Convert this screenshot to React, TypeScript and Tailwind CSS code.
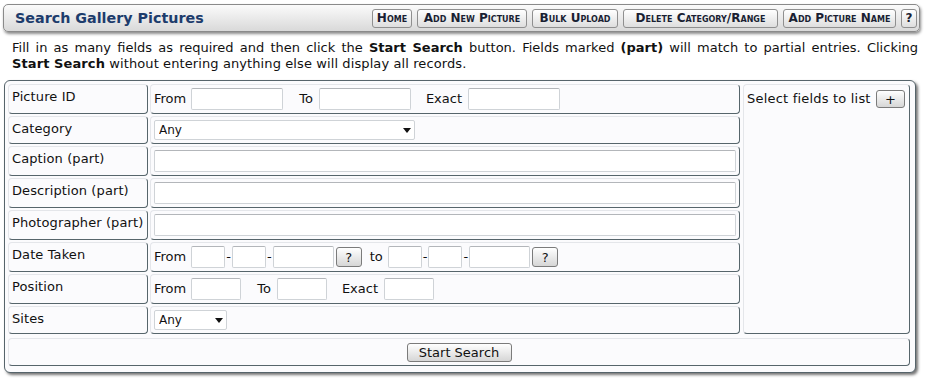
import React from 'react';

const cell = 'border border-t-[#e4e6ea] border-l-[#e4e6ea] border-r-[#56656b] border-b-[#56656b] rounded-[4px]';
const input = 'h-[22px] bg-white border border-[#cfd3d7] border-t-[#b3b6ba] rounded-[2px] outline-none px-1 text-[13px]';
const btn = 'bg-gradient-to-b from-white to-[#d6d6d6] border border-[#7b7b7b] rounded-[3px] text-[13px] leading-none text-[#111] flex items-center justify-center';

const Select: React.FC<{ width: string }> = ({ width }) => (
  <div className={`relative h-[20px] ${width}`}>
    <select className="appearance-none w-full h-full bg-white border border-[#cfd3d7] rounded-[2px] pl-[4px] text-[12px] text-[#111] outline-none">
      <option>Any</option>
    </select>
    <svg className="absolute right-[4px] top-[8px] pointer-events-none" width="8" height="5" viewBox="0 0 8 5">
      <path d="M0 0h8L4 5z" fill="#111" />
    </svg>
  </div>
);

const Row: React.FC<{ label: string; children: React.ReactNode }> = ({ label, children }) => (
  <div className="flex gap-[2px]">
    <div className={`${cell} w-[140px] pl-[3px] pt-[4px] leading-[16px] tracking-[0.1px]`}>{label}</div>
    <div className={`${cell} w-[590px] pl-[3px] pr-[3px] py-[3px] flex items-center`}>{children}</div>
  </div>
);

const navButtons: [string, string][] = [
  ['Home', 'w-[40px]'],
  ['Add New Picture', 'w-[110px]'],
  ['Bulk Upload', 'w-[86px]'],
  ['Delete Category/Range', 'w-[155px]'],
  ['Add Picture Name', 'w-[113px]'],
  ['?', 'w-[16px]'],
];

export default function App() {
  return (
    <div className="w-[929px] h-[379px] bg-white font-['DejaVu_Sans',sans-serif] text-[13px] text-[#111] pt-[4px] pl-[3px]">
      <header className="w-[917px] h-[28px] rounded-[5px] border border-[#8a8a8a] bg-gradient-to-b from-[#fbfbfb] to-[#d9d9d9] shadow-[1px_2px_3px_rgba(0,0,0,0.45)] flex items-center justify-between pl-[11px] pr-[2px]">
        <h1 className="text-[14.3px] font-bold text-[#1d3c6c] leading-none">Search Gallery Pictures</h1>
        <div className="flex gap-[5px]">
          {navButtons.map(([t, w]) => (
            <button
              key={t}
              className={`${w} h-[19px] bg-gradient-to-b from-white to-[#dedede] border border-[#8f8f8f] rounded-[3px] text-[12px] font-bold leading-none text-[#1a1f33] [font-variant-caps:small-caps] whitespace-nowrap flex items-center justify-center`}
            >
              {t}
            </button>
          ))}
        </div>
      </header>

      <div className="mt-[8px] ml-[9px] w-[906px] leading-[16px] text-justify">
        <div className="[text-align-last:justify]">
          Fill in as many fields as required and then click the <b>Start Search</b> button. Fields marked <b>(part)</b> will match to partial entries. Clicking
        </div>
        <div className="tracking-[0.1px]">
          <b>Start Search</b> without entering anything else will display all records.
        </div>
      </div>

      <main className="mt-[8px] ml-[1px] w-[912px] border border-[#56646b] rounded-[6px] shadow-[2px_2px_3px_rgba(0,0,0,0.55)] bg-[#fbfbfd] pt-[3px] pl-[3px] pr-[5px] pb-[6px]">
        <div className="flex gap-[3px]">
          <div className="flex flex-col gap-[2px]">
            <Row label="Picture ID">
              <span>From</span>
              <input className={`${input} ml-[5px] w-[92px]`} />
              <span className="ml-[16px]">To</span>
              <input className={`${input} ml-[6px] w-[92px]`} />
              <span className="ml-[15px]">Exact</span>
              <input className={`${input} ml-[6px] w-[92px]`} />
            </Row>
            <Row label="Category">
              <Select width="w-[261px]" />
            </Row>
            <Row label="Caption (part)">
              <input className={`${input} w-full`} />
            </Row>
            <Row label="Description (part)">
              <input className={`${input} w-full`} />
            </Row>
            <Row label="Photographer (part)">
              <input className={`${input} w-full`} />
            </Row>
            <Row label="Date Taken">
              <span>From</span>
              <input className={`${input} ml-[5px] w-[34px]`} />
              <span className="mx-[1px]">-</span>
              <input className={`${input} w-[34px]`} />
              <span className="mx-[1px]">-</span>
              <input className={`${input} w-[61px]`} />
              <button className={`${btn} ml-[2px] w-[26px] h-[20px]`}>?</button>
              <span className="ml-[8px]">to</span>
              <input className={`${input} ml-[5px] w-[34px]`} />
              <span className="mx-[1px]">-</span>
              <input className={`${input} w-[34px]`} />
              <span className="mx-[1px]">-</span>
              <input className={`${input} w-[61px]`} />
              <button className={`${btn} ml-[2px] w-[26px] h-[20px]`}>?</button>
            </Row>
            <Row label="Position">
              <span>From</span>
              <input className={`${input} ml-[5px] w-[50px]`} />
              <span className="ml-[16px]">To</span>
              <input className={`${input} ml-[6px] w-[50px]`} />
              <span className="ml-[15px]">Exact</span>
              <input className={`${input} ml-[6px] w-[50px]`} />
            </Row>
            <Row label="Sites">
              <Select width="w-[73px]" />
            </Row>
          </div>
          <aside className={`${cell} w-[167px] pl-[3px] pr-[4px] pt-[5px] flex items-start justify-between`}>
            <span className="leading-[18px] tracking-[0.2px]">Select fields to list</span>
            <button className={`${btn} w-[29px] h-[18px]`}>+</button>
          </aside>
        </div>
        <div className={`${cell} mt-[4px] h-[28px] flex items-center justify-center`}>
          <button className={`${btn} w-[105px] h-[19px]`}>Start Search</button>
        </div>
      </main>
    </div>
  );
}
